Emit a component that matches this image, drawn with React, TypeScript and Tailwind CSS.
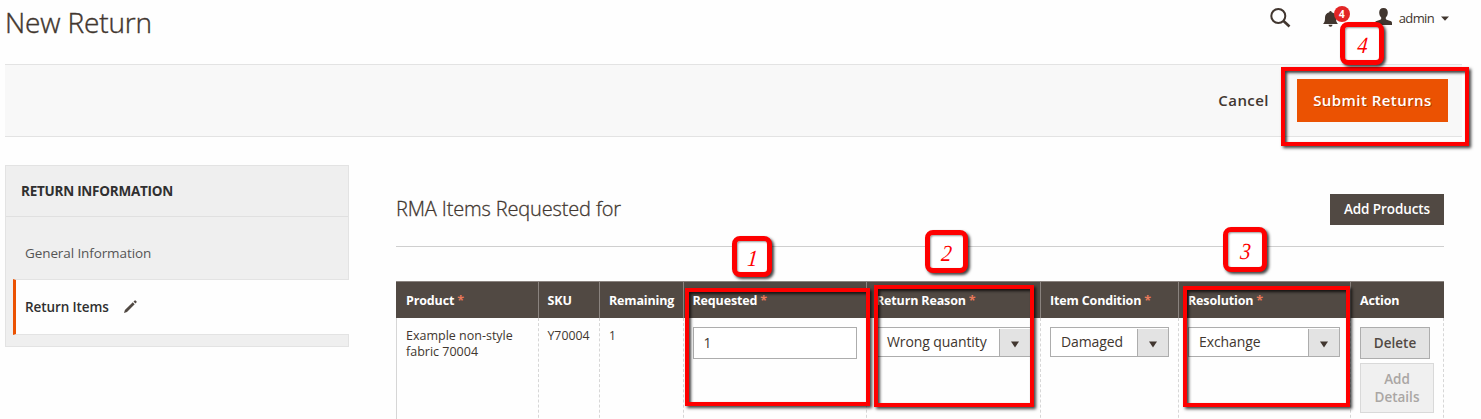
import React from "react";

const Required = () => <span className="ml-[3px] text-[#e9795a]">*</span>;

const headings = [
  { label: "Product", required: true },
  { label: "SKU", required: false },
  { label: "Remaining", required: false },
  { label: "Requested", required: true },
  { label: "Return Reason", required: true },
  { label: "Item Condition", required: true },
  { label: "Resolution", required: true },
  { label: "Action", required: false },
];

const columns = "grid grid-cols-[141.5px_61.500px_83.500px_183.500px_174px_138px_172px_94px]";

function Select({ value, className }: { value: string; className: string }) {
  return (
    <div className={`flex h-[30px] border border-[#adadad] bg-white text-sm leading-[27px] text-[#41362f] ${className}`}>
      <span className="flex-1 whitespace-nowrap pl-[10px] tracking-[-0.1px]">{value}</span>
      <span className="mt-px flex w-[31px] items-center justify-center border-l border-[#adadad] bg-[#e3e3e3] pt-1">
        <svg width="8" height="7" viewBox="0 0 8 7"><path d="M0 .5h8L4 6.5z" fill="#41362f" /></svg>
      </span>
    </div>
  );
}

function Callout({ n, className }: { n: string; className: string }) {
  return (
    <div className={`absolute flex items-center justify-center rounded-[8px] border-[5px] border-[#fe0000] bg-white pl-px pt-[3px] font-['Liberation_Serif',serif] text-[23px] italic leading-none text-[#fe0000] shadow-[2px_2px_3px_rgba(0,0,0,0.75),inset_1px_1px_2px_rgba(0,0,0,0.4)] ${className}`}>
      <span className="-skew-x-6 scale-x-90">{n}</span>
    </div>
  );
}

function Highlight({ className }: { className: string }) {
  return (
    <div className={`absolute border-4 border-[#fe0000] shadow-[2px_2px_3px_rgba(0,0,0,0.75),inset_2px_2px_3px_rgba(0,0,0,0.75)] ${className}`} />
  );
}

export default function App() {
  return (
    <div className="relative h-[419px] w-[1481px] overflow-hidden bg-[#fefefe] font-['Open_Sans',sans-serif] text-[#303030]">
      <header className="flex h-16 justify-between pl-[5px] pr-8">
        <h1 className="pt-[3px] text-[28px] font-light leading-[38px] tracking-[-0.15px] text-[#41362f] [-webkit-text-stroke:0.4px_#41362f]">New Return</h1>
        <div className="flex h-9 items-center">
          <svg className="mr-[32px]" width="21" height="20" viewBox="0 0 21 20" fill="none" stroke="#41362f">
            <circle cx="8.3" cy="8" r="7" strokeWidth="2" />
            <path d="M13.3 12.8l6.2 5.7" strokeWidth="2.6" />
          </svg>
          <div className="relative mr-[37px] pt-0.5">
            <svg width="15" height="16" viewBox="0 0 15 16" fill="#41362f">
              <path d="M6.3 1.2a1.2 1.2 0 0 1 2.4 0C11.6 1.8 13 4 13 6.500c0 3 .2 4.500 1.900 6.500H.1C1.800 11 2 9.500 2 6.500c0-2.500 1.400-4.700 4.300-5.300zM5.500 13.800h4a2 2 0 0 1-4 0z" />
            </svg>
            <span className="absolute -top-[3px] left-[11px] flex h-4 w-4 items-center justify-center rounded-full bg-[#e22626] text-[10px] font-bold text-white">4</span>
          </div>
          <svg className="-mt-[3px]" width="17" height="17" viewBox="0 0 17 17" fill="#41362f">
            <path d="M8.500 0c2.900 0 4.300 1.900 4.300 4.600 0 2.200-.8 3.900-2 4.900v1.300c0 .5.300.8.900 1l3.700 1.300c1.100.4 1.600 1 1.600 2V17H0v-1.900c0-1 .5-1.600 1.600-2l3.700-1.300c.6-.2.9-.5.900-1V9.500c-1.200-1-2-2.700-2-4.900C4.200 1.900 5.600 0 8.500 0z" />
          </svg>
          <span className="ml-[7px] mt-px text-[13px] tracking-[-0.65px] text-[#41362f]">admin</span>
          <svg className="ml-[7px]" width="8" height="5" viewBox="0 0 8 5"><path d="M0 .5h8L4 4.700z" fill="#41362f" /></svg>
        </div>
      </header>

      <div className="ml-[5px] mr-[19px] flex h-[73px] items-center justify-end border-y border-[#e3e3e3] bg-[#f8f8f8] pr-[14px]">
        <button className="mr-[28px] text-[15px] font-semibold tracking-[0.45px] text-[#41362f]">Cancel</button>
        <button className="h-[43px] w-[151px] whitespace-nowrap bg-[#eb5202] text-[15px] font-semibold tracking-[0.45px] text-white [text-shadow:1px_1px_0_rgba(0,0,0,0.25)]">Submit Returns</button>
      </div>

      <main className="flex pl-[5px] pt-7">
        <aside className="h-[182px] w-[344px] border border-[#e3e3e3] bg-[#efefef]">
          <h2 className="h-[51px] border-b border-[#e0e0e0] pl-[15px] text-[13.500px] font-bold leading-[51px] tracking-[-0.25px]">RETURN INFORMATION</h2>
          <div className="h-[62px] pl-[19px] pt-[24px] text-[13.500px] leading-6 tracking-[-0.1px] text-[#555]">General Information</div>
          <div className="-mr-px ml-[7px] flex h-[56px] items-center border-y border-l-[3px] border-y-[#e3e3e3] border-l-[#eb5202] bg-[#fefefe] pl-[9px] text-[13.500px] font-semibold tracking-[-0.1px]">
            Return Items
            <svg className="-mt-px ml-[15px]" width="13" height="13" viewBox="0 0 13 13" fill="#514943">
              <path d="M0 13l.9-3L8.800 2.300l1.900 1.900L3 12zM9.500 1.600l1.200-1.200q.4-.4.8 0l1.100 1.100q.4.4 0 .8l-1.200 1.200z" />
            </svg>
          </div>
        </aside>

        <section className="ml-[47px] w-[1048px]">
          <div className="flex h-[82px] items-start justify-between border-b border-[#cfcfcf] pt-[29px]">
            <h2 className="text-[20px] font-light leading-[29px] tracking-[-0.15px] text-[#41362f] [-webkit-text-stroke:0.3px_#41362f]">RMA Items Requested for</h2>
            <button className="h-[31px] w-[114px] whitespace-nowrap bg-[#514943] text-[13.500px] font-semibold tracking-[-0.1px] text-white">Add Products</button>
          </div>

          <div className="mt-[34px]">
            <div className={`${columns} h-[37px] border-t border-[#8a837f] bg-[#514943] text-[12.500px] font-bold leading-[37px] tracking-[-0.15px] text-white`}>
              {headings.map((h, i) => (
                <div key={h.label} className={`whitespace-nowrap border-l pl-[9px] ${i === 0 ? "border-[#514943]" : "border-[#8a837f]"}`}>
                  {h.label}
                  {h.required && <Required />}
                </div>
              ))}
            </div>
            <div className={`${columns} h-[110px] text-xs leading-4 text-[#41362f] [&>div]:border-l [&>div]:border-dashed [&>div]:border-[#d6d6d6] [&>div]:pl-[9px] [&>div]:pt-[9px]`}>
              <div className="!border-solid"><p className="mt-px text-[12.500px]">Example non-style fabric 70004</p></div>
              <div><p className="mt-px text-[12.300px]">Y70004</p></div>
              <div><p className="mt-px">1</p></div>
              <div>
                <div className="h-[32px] w-[164px] border border-[#adadad] bg-white pl-[10px] text-sm leading-[30px]">1</div>
              </div>
              <div><Select value="Wrong quantity" className="w-[155px]" /></div>
              <div><Select value="Damaged" className="w-[119px]" /></div>
              <div><Select value="Exchange" className="w-[152px]" /></div>
              <div className="!border-r-[#d6d6d6] border-r">
                <button className="block h-[32px] w-[70px] border border-[#adadad] bg-[#e3e3e3] text-[13.500px] font-semibold text-[#514943]">Delete</button>
                <button className="mt-[4px] block h-[50px] w-[74px] border border-[#d9d9d9] bg-[#f0f0f0] text-[13.500px] font-semibold leading-[18px] text-[#aaa6a4]">Add<br />Details</button>
              </div>
            </div>
          </div>
        </section>
      </main>

      <Highlight className="left-[685px] top-[288px] h-[118px] w-[185px]" />
      <Highlight className="left-[874px] top-[285px] h-[122px] w-[160px]" />
      <Highlight className="left-[1183px] top-[286px] h-[121px] w-[167px]" />
      <Highlight className="left-[1281px] top-[67px] h-[79px] w-[188px]" />
      <Callout n="1" className="left-[732px] top-[236px] h-[41px] w-[40px]" />
      <Callout n="2" className="left-[925px] top-[230px] h-[43px] w-[43px]" />
      <Callout n="3" className="left-[1223px] top-[227px] h-[45px] w-[44px]" />
      <Callout n="4" className="left-[1340px] top-[22px] h-[43px] w-[44px]" />
    </div>
  );
}
